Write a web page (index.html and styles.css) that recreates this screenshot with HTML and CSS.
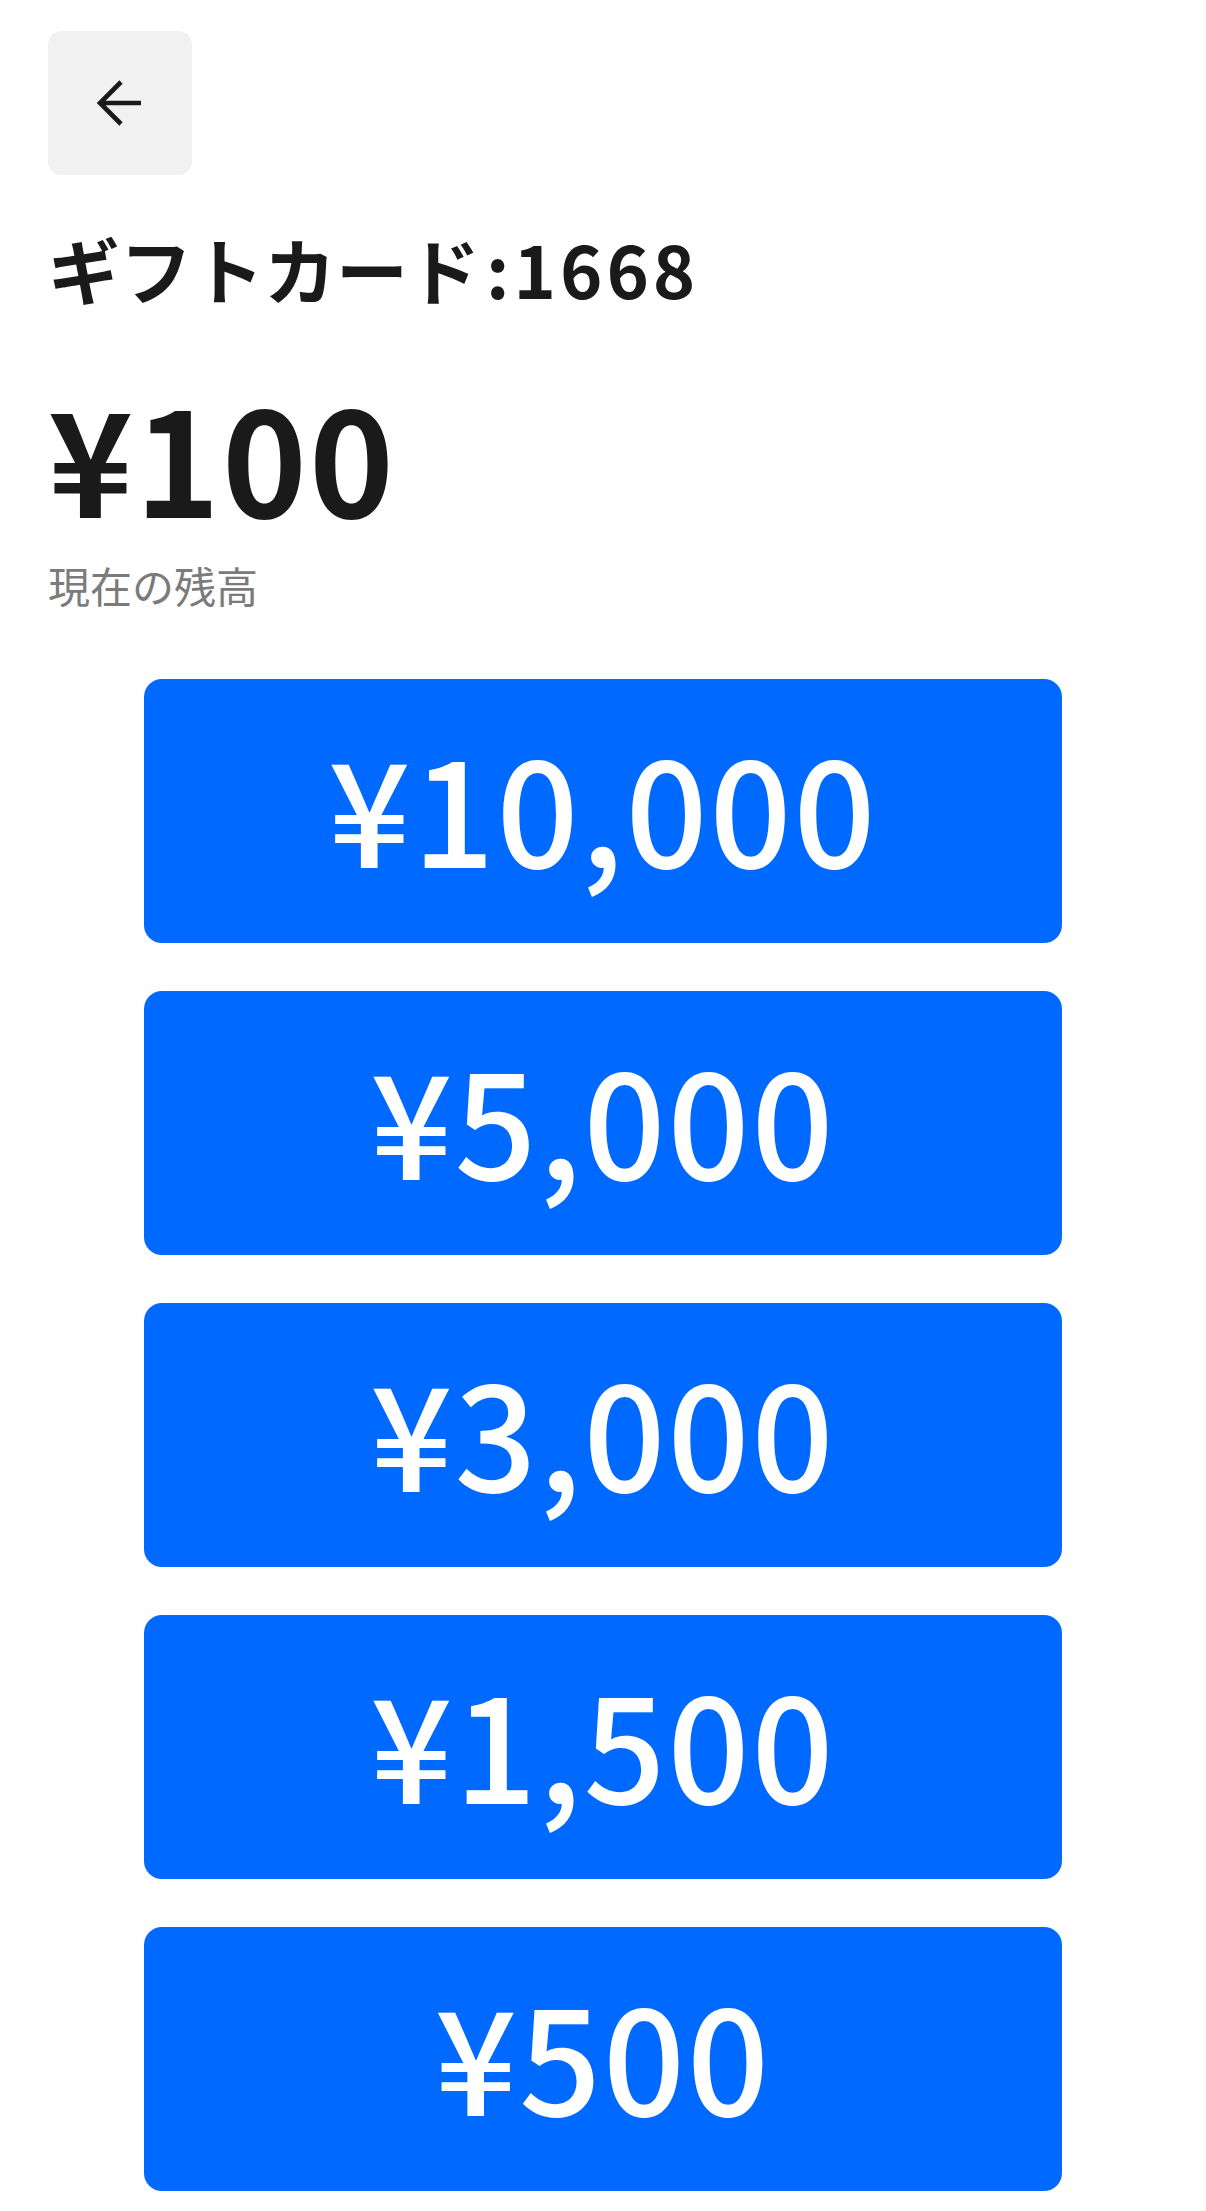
FILE: index.html
```html
<!DOCTYPE html>
<html lang="ja">

<head>
    <meta charset="UTF-8">
    <meta name="viewport" content="width=device-width, initial-scale=1.0">
    <title>ギフトカード</title>
    <link rel="stylesheet" href="styles.css">
</head>

<body>
    <div class="page">
        <button class="back-btn" aria-label="戻る">
            <svg width="48" height="48" viewBox="0 0 48 48" fill="none" stroke="#1a1a1a" stroke-width="4.6">
                <path d="M45 24H4" />
                <path d="M25 3L4 24L25 45" />
            </svg>
        </button>

        <h1 class="title">ギフトカード<span class="card-no">:1668</span></h1>

        <div class="balance">
            <div class="amount">¥100</div>
            <p class="label">現在の残高</p>
        </div>

        <div class="options">
            <button class="amount-btn">¥10,000</button>
            <button class="amount-btn">¥5,000</button>
            <button class="amount-btn">¥3,000</button>
            <button class="amount-btn">¥1,500</button>
            <button class="amount-btn">¥500</button>
        </div>
    </div>
</body>

</html>
```

FILE: styles.css
```css
body {
    margin: 0;
    background: #fff;
    font-family: "Noto Sans CJK JP", "Noto Sans", sans-serif;
    color: #1a1a1a;
}

.page {
    padding: 31px 48px 20px;
}

button {
    font-family: inherit;
    border: none;
    cursor: pointer;
}

.back-btn {
    width: 144px;
    height: 144px;
    padding: 0;
    border-radius: 14px;
    background: #f1f1f1;
    display: flex;
    justify-content: center;
    align-items: center;
}

.title {
    margin: 45px 0 0;
    font-size: 72px;
    line-height: 96px;
    font-weight: 700;
}

.card-no {
    margin-left: 6px;
    letter-spacing: 4px;
}

.amount {
    margin-top: 67px;
    font-size: 144px;
    line-height: 144px;
    font-weight: 600;
    letter-spacing: 2px;
}

.label {
    margin: 30px 0 0;
    font-size: 42px;
    line-height: 56px;
    color: #7b7b7b;
}

.options {
    display: flex;
    flex-direction: column;
    gap: 48px;
    margin-top: 66px;
    padding: 0 96px;
}

.amount-btn {
    height: 264px;
    padding: 0 0 12px;
    border-radius: 18px;
    background: #0069ff;
    color: #fff;
    font-size: 144px;
    font-weight: 500;
    letter-spacing: 2px;
    display: flex;
    justify-content: center;
    align-items: center;
}
```
